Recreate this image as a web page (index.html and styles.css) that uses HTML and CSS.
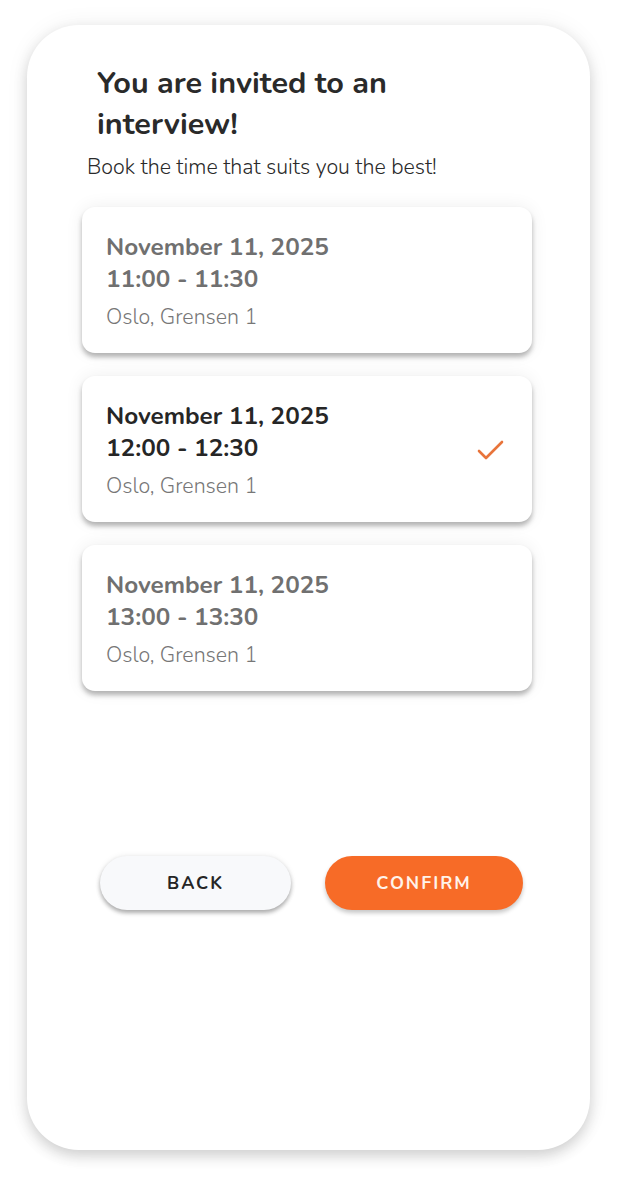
FILE: index.html
```html
<!DOCTYPE html>
<html lang="en">
<head>
    <meta charset="UTF-8" />
    <meta name="viewport" content="width=device-width, initial-scale=1.0" />
    <title>Interview booking</title>
    <link rel="stylesheet" href="styles.css">
</head>
<body>

    <div class="phone">
        <h1 class="title">You are invited to an interview!</h1>
        <p class="subtitle">Book the time that suits you the best!</p>

        <div class="slots">
            <div class="slot">
                <div class="slot-info">
                    <div class="slot-date">November 11, 2025</div>
                    <div class="slot-time">11:00 - 11:30</div>
                    <div class="slot-place">Oslo, Grensen 1</div>
                </div>
            </div>
            <div class="slot selected">
                <div class="slot-info">
                    <div class="slot-date">November 11, 2025</div>
                    <div class="slot-time">12:00 - 12:30</div>
                    <div class="slot-place">Oslo, Grensen 1</div>
                </div>
                <svg class="check" width="30" height="24" viewBox="0 0 30 24">
                    <path d="M3 13 L10 20 L26 4" fill="none" stroke="#e8743b" stroke-width="2.6" stroke-linecap="round" stroke-linejoin="round" />
                </svg>
            </div>
            <div class="slot">
                <div class="slot-info">
                    <div class="slot-date">November 11, 2025</div>
                    <div class="slot-time">13:00 - 13:30</div>
                    <div class="slot-place">Oslo, Grensen 1</div>
                </div>
            </div>
        </div>

        <div class="actions">
            <button class="btn btn-back">BACK</button>
            <button class="btn btn-confirm">CONFIRM</button>
        </div>
    </div>

</body>
</html>
```

FILE: styles.css
```css
body {
    background-color: #fff;
    margin: 0;
    padding: 25px 27px 29px;
    font-family: "Nunito", Lato, "Noto Sans", sans-serif;
    color: #252525;
}

.phone {
    background-color: #fff;
    width: 563px;
    height: 1125px;
    box-sizing: border-box;
    border-radius: 52px;
    padding: 38px 58px 0 55px;
    box-shadow: 0 6px 14px rgba(0, 0, 0, 0.16), 0 0 24px rgba(0, 0, 0, 0.06);
}

.title {
    margin: 0 0 0 15px;
    font-size: 30.6px;
    line-height: 41px;
    font-weight: 700;
    width: 345px;
    color: #2a2a2a;
}

.subtitle {
    margin: 9px 0 0 5px;
    font-size: 21.4px;
    line-height: 26px;
    font-weight: 300;
    color: #2a2a2a;
}

.slots {
    display: flex;
    flex-direction: column;
    gap: 23px;
    margin-top: 27px;
}

.slot {
    display: flex;
    align-items: center;
    justify-content: space-between;
    height: 146px;
    box-sizing: border-box;
    padding: 0 26px 0 24px;
    border-radius: 13px;
    background: #fff;
    box-shadow: 0 4px 5px rgba(0, 0, 0, 0.28), 0 0 18px rgba(0, 0, 0, 0.07);
    color: #707070;
}

.slot.selected {
    color: #262626;
}

.slot-date,
.slot-time {
    font-size: 24.3px;
    line-height: 32px;
    font-weight: 700;
}

.slot-place {
    margin-top: 9px;
    font-size: 21.4px;
    line-height: 26px;
    font-weight: 300;
    color: #777;
}

.check {
    margin-top: 2px;
}

.actions {
    display: flex;
    gap: 34px;
    margin: 165px 0 0 18px;
}

.btn {
    height: 54px;
    border: none;
    border-radius: 27px;
    font-family: inherit;
    font-size: 17.8px;
    font-weight: 700;
    letter-spacing: 2px;
    cursor: pointer;
}

.btn-back {
    width: 191px;
    background: #f8f9fb;
    color: #252525;
    box-shadow: 0 3px 4px rgba(0, 0, 0, 0.3), 0 0 6px rgba(0, 0, 0, 0.08);
}

.btn-confirm {
    width: 198px;
    background: #f76b27;
    color: #fff3ea;
    box-shadow: 0 3px 4px rgba(0, 0, 0, 0.22);
}
```
